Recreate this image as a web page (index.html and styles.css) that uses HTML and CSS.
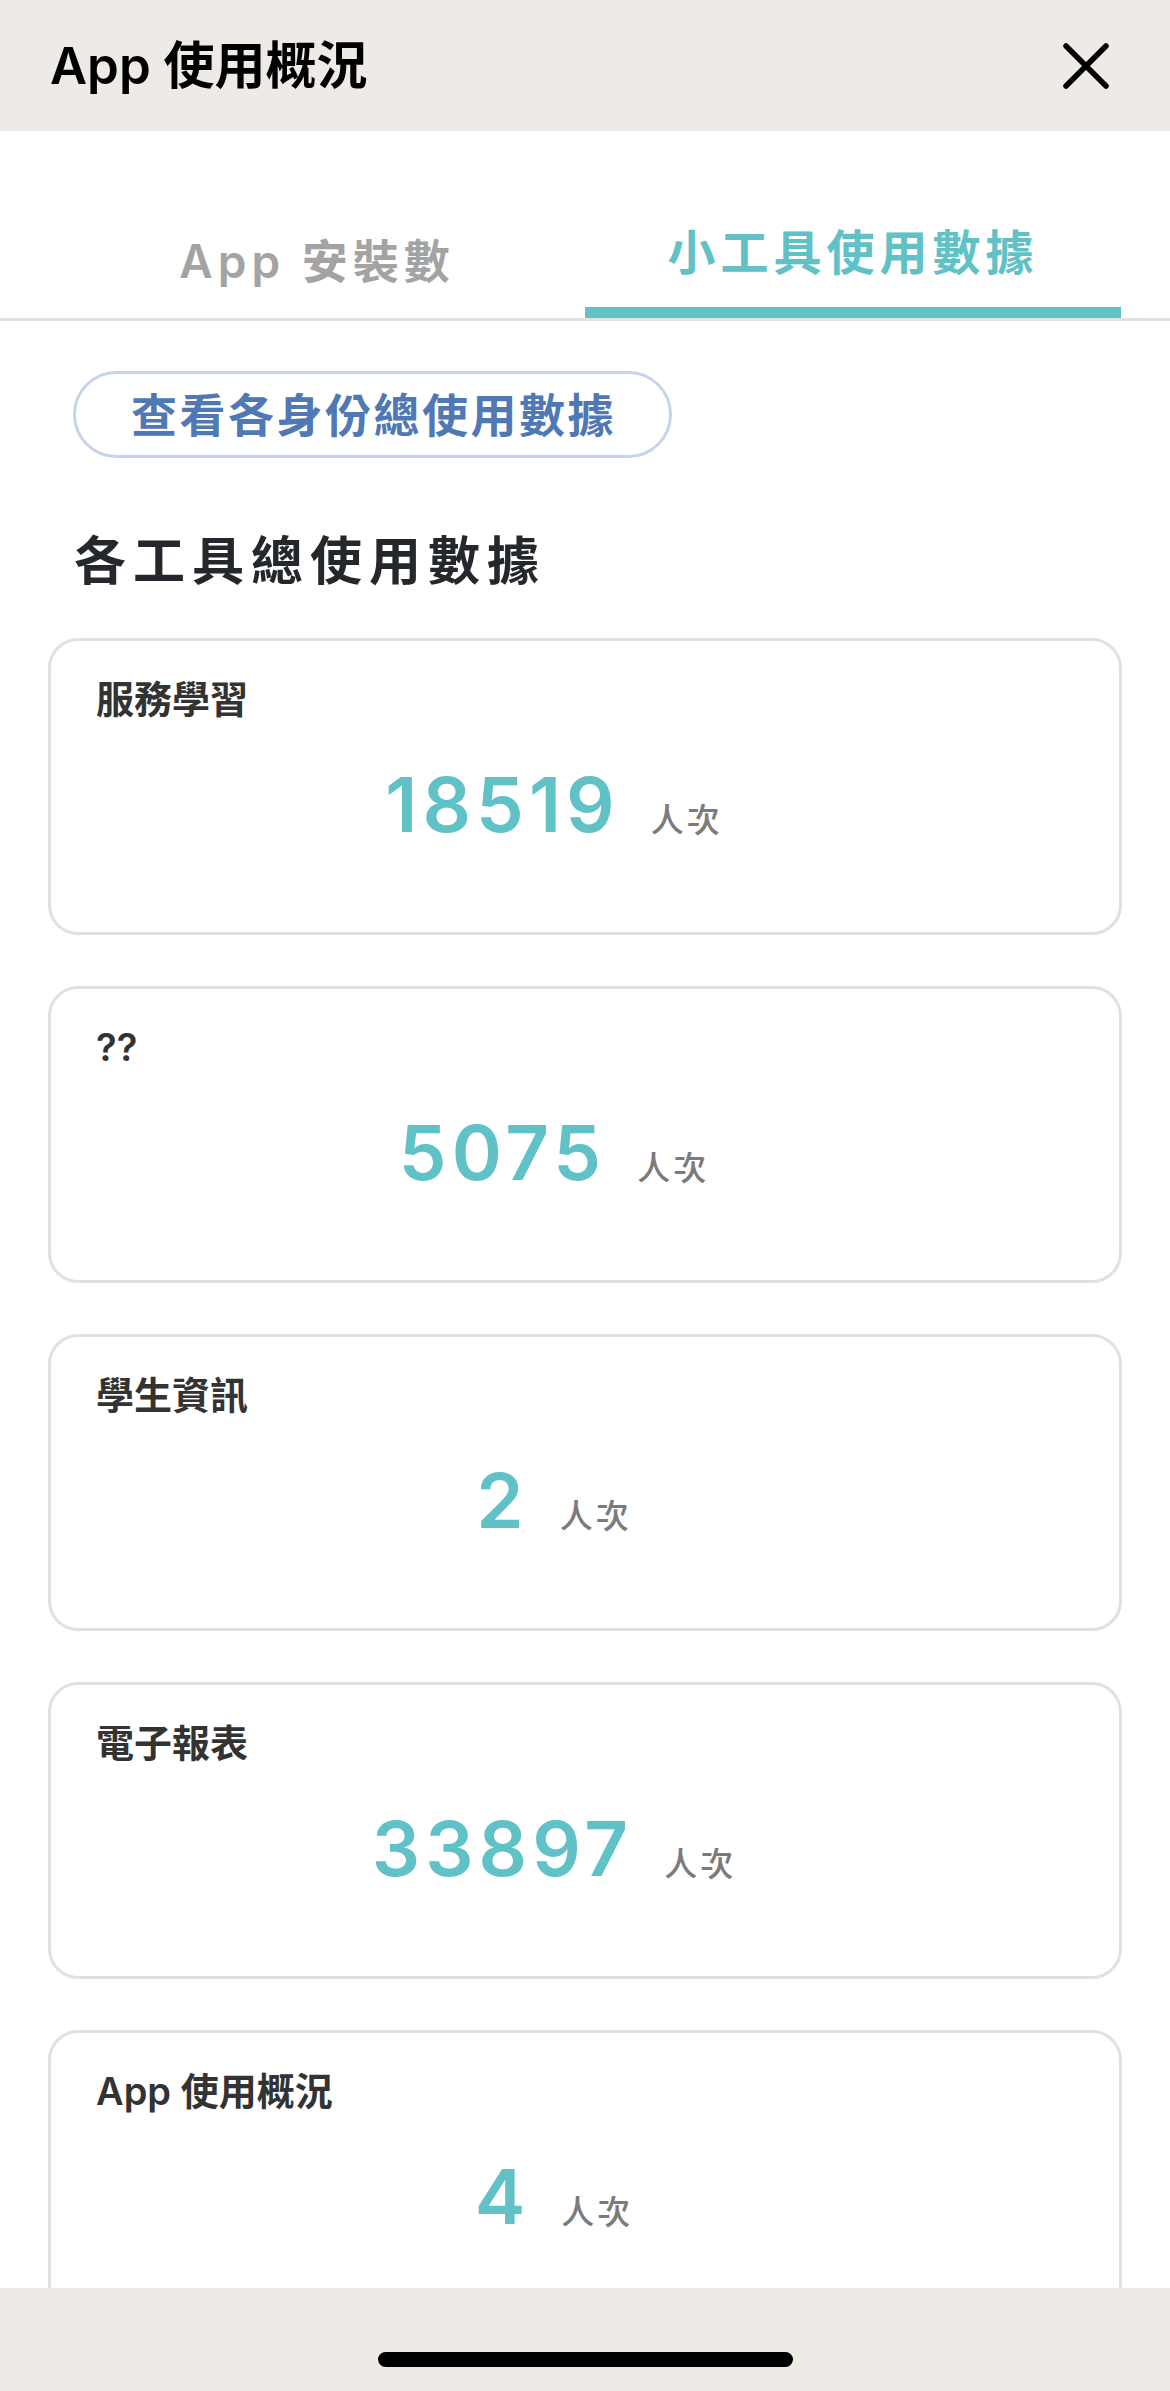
FILE: index.html
```html
<!DOCTYPE html>
<html lang="zh-Hant">
<head>
  <meta charset="UTF-8">
  <title>App 使用概況</title>
  <link rel="stylesheet" href="styles.css">
</head>
<body>
  <header class="topbar">
    <h1 class="topbar-title">App 使用概況</h1>
    <button class="close-btn" aria-label="關閉">
      <svg width="48" height="48" viewBox="0 0 48 48">
        <path d="M4 4 L44 44 M44 4 L4 44" stroke="#000" stroke-width="5.5" stroke-linecap="round" fill="none"/>
      </svg>
    </button>
  </header>

  <nav class="tabs">
    <div class="tab">
      <span class="tab-label">App 安裝數</span>
      <span class="tab-bar"></span>
    </div>
    <div class="tab tab-active">
      <span class="tab-label">小工具使用數據</span>
      <span class="tab-bar"></span>
    </div>
  </nav>

  <main class="content">
    <button class="pill-btn">查看各身份總使用數據</button>
    <h2 class="section-title">各工具總使用數據</h2>

    <div class="card-list">
      <div class="stat-card">
        <div class="stat-label">服務學習</div>
        <div class="stat-value"><span class="stat-num">18519</span><span class="stat-unit">人次</span></div>
      </div>
      <div class="stat-card">
        <div class="stat-label">??</div>
        <div class="stat-value"><span class="stat-num">5075</span><span class="stat-unit">人次</span></div>
      </div>
      <div class="stat-card">
        <div class="stat-label">學生資訊</div>
        <div class="stat-value"><span class="stat-num">2</span><span class="stat-unit">人次</span></div>
      </div>
      <div class="stat-card">
        <div class="stat-label">電子報表</div>
        <div class="stat-value"><span class="stat-num">33897</span><span class="stat-unit">人次</span></div>
      </div>
      <div class="stat-card">
        <div class="stat-label">App 使用概況</div>
        <div class="stat-value"><span class="stat-num">4</span><span class="stat-unit">人次</span></div>
      </div>
    </div>
  </main>

  <div class="home-bar"><span class="home-indicator"></span></div>
</body>
</html>
```

FILE: styles.css
```css
body {
  margin: 0;
  background: #fff;
  font-family: Inter, "Noto Sans CJK TC", sans-serif;
  color: #222;
}

.topbar {
  height: 131px;
  background: #eeeae6;
  display: flex;
  align-items: center;
  justify-content: space-between;
  padding: 0 60px 0 50px;
}
.topbar-title {
  margin: 0;
  font-size: 51px;
  line-height: 1;
  font-weight: 600;
  color: #000;
}
.close-btn {
  background: none;
  border: 0;
  padding: 0;
}
.close-btn svg {
  display: block;
}

.tabs {
  display: grid;
  grid-template-columns: 1fr 1fr;
  padding: 0 49px;
  border-bottom: 3px solid #e2e2e2;
}
.tab {
  display: flex;
  flex-direction: column;
  align-items: center;
  padding-top: 98px;
}
.tab-label {
  font-size: 46px;
  line-height: 1;
  font-weight: 600;
  letter-spacing: 5px;
  color: #a3a3a3;
  padding-top: 9px;
  margin-bottom: 21px;
}
.tab-bar {
  align-self: stretch;
  height: 11px;
}
.tab-active .tab-label {
  font-size: 48px;
  color: #60c1c7;
  padding-top: 0;
  margin-bottom: 30px;
}
.tab-active .tab-bar {
  background: #60c1c7;
}

.content {
  padding: 0 48px 120px;
}
.pill-btn {
  display: flex;
  align-items: center;
  height: 87px;
  margin: 50px 0 0 25px;
  padding: 0 53px 0 55px;
  border: 3px solid #c6d4eb;
  border-radius: 44px;
  background: #fff;
  font-family: inherit;
  font-size: 46px;
  line-height: 1;
  font-weight: 600;
  letter-spacing: 2.5px;
  color: #4f78b5;
}
.section-title {
  margin: 78px 0 50px 26px;
  font-size: 52px;
  line-height: 1;
  font-weight: 700;
  letter-spacing: 7px;
  color: #24272b;
}

.card-list {
  display: flex;
  flex-direction: column;
  gap: 51px;
}
.stat-card {
  border: 3px solid #e1e1e1;
  border-radius: 30px;
  padding: 39px 45px 90px;
}
.stat-label {
  font-size: 38px;
  line-height: 1;
  font-weight: 600;
  color: #333;
}
.stat-value {
  display: flex;
  justify-content: center;
  align-items: baseline;
  margin-top: 48px;
  padding-right: 62px;
}
.stat-num {
  font-size: 76px;
  line-height: 1;
  font-weight: 600;
  letter-spacing: 5px;
  color: #60c1c7;
}
.stat-unit {
  margin-left: 31px;
  font-size: 33px;
  line-height: 1;
  font-weight: 500;
  letter-spacing: 3px;
  color: #7b7b7b;
}

.home-bar {
  position: fixed;
  left: 0;
  right: 0;
  bottom: 0;
  height: 103px;
  background: #eeeae6;
  display: flex;
  justify-content: center;
  padding-top: 64px;
  box-sizing: border-box;
}
.home-indicator {
  width: 415px;
  height: 15px;
  border-radius: 8px;
  background: #000;
}
```
